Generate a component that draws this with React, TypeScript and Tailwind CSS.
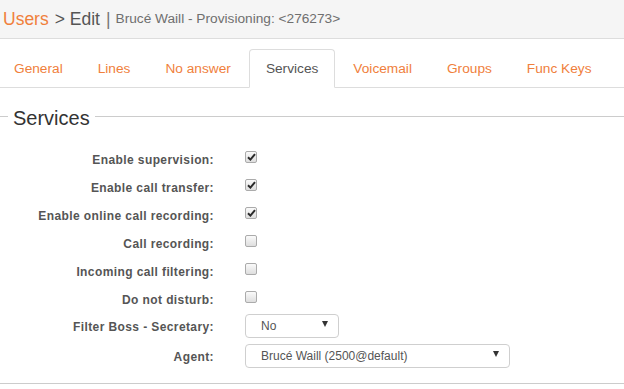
import React from "react"

const tabs = ["General", "Lines", "No answer", "Services", "Voicemail", "Groups", "Func Keys"]

const rows = [
  { label: "Enable supervision:", checked: true },
  { label: "Enable call transfer:", checked: true },
  { label: "Enable online call recording:", checked: true },
  { label: "Call recording:", checked: false },
  { label: "Incoming call filtering:", checked: false },
  { label: "Do not disturb:", checked: false },
]

function Checkbox({ checked }: { checked: boolean }) {
  return (
    <span className="mt-[7px] flex h-[12px] w-[12px] items-center justify-center rounded-[2px] border border-[#ababab] bg-gradient-to-b from-[#fafafa] to-[#dedede]">
      {checked && (
        <svg width="9" height="8" viewBox="0 0 9 8">
          <path d="M1 4.3 L3.4 6.6 L8 1.2" fill="none" stroke="#2b2b2b" strokeWidth="2" />
        </svg>
      )}
    </span>
  )
}

function Select({ value, width }: { value: string; width: string }) {
  return (
    <div
      className={`${width} relative flex h-[24px] items-center rounded-[4px] border border-[#cfcfcf] bg-white pl-[15px] text-[12px] text-[#555]`}
    >
      {value}
      <svg className="absolute right-[10px] top-[6px]" width="6" height="6" viewBox="0 0 6 6">
        <path d="M0 0 H6 L3 6 Z" fill="#333" />
      </svg>
    </div>
  )
}

export default function App() {
  return (
    <div className="h-[389px] w-[624px] overflow-hidden bg-white font-['Liberation_Sans',Arial,sans-serif]">
      <div className="flex h-[39px] items-center border-b border-[#dddddd] bg-[#f5f5f5] pl-[3px] pt-[1px]">
        <span className="text-[17.5px] text-[#f0803c]">Users</span>
        <span className="ml-[6px] text-[17.5px] text-[#555]">&gt; Edit</span>
        <span className="ml-[6px] text-[17.5px] text-[#777]">|</span>
        <span className="ml-[5px] text-[13.7px] text-[#6f6f6f]">Brucé Waill - Provisioning: &lt;276273&gt;</span>
      </div>

      <div className="mt-[10px] flex border-b border-[#dddddd]">
        <div className="-ml-[3px] flex">
          {tabs.map((t) => (
            <div
              key={t}
              className={`-mb-px mr-[1px] flex h-[39px] items-center px-4 pt-[1px] text-[13.7px] ${
                t === "Services"
                  ? "rounded-t-[4px] border border-b-white border-[#dddddd] bg-white text-[#555]"
                  : "border border-transparent text-[#f0803c]"
              }`}
            >
              {t}
            </div>
          ))}
        </div>
      </div>

      <div className="mt-[16px] flex h-[28px] items-center">
        <div className="mt-[-4px] h-px w-[8px] bg-[#cccccc]" />
        <span className="px-[5px] text-[20px] leading-[28px] text-[#333]">Services</span>
        <div className="mt-[-4px] h-px flex-1 bg-[#cccccc]" />
      </div>

      <div className="mt-[12px] grid grid-cols-[214px_1fr] gap-x-[31px]">
        {rows.map((r) => (
          <React.Fragment key={r.label}>
            <div className="h-[28px] pt-[9px] text-right text-[12px] font-bold leading-[14px] tracking-[0.4px] text-[#555]">
              {r.label}
            </div>
            <div className="h-[28px]">
              <Checkbox checked={r.checked} />
            </div>
          </React.Fragment>
        ))}
        <div className="mt-[2px] flex h-[24px] items-center justify-end pt-[2px] text-[12px] font-bold tracking-[0.4px] text-[#555]">
          Filter Boss - Secretary:
        </div>
        <div className="mt-[2px]">
          <Select value="No" width="w-[94px]" />
        </div>
        <div className="mt-[6px] flex h-[24px] items-center justify-end pt-[2px] text-[12px] font-bold tracking-[0.4px] text-[#555]">
          Agent:
        </div>
        <div className="mt-[6px]">
          <Select value="Brucé Waill (2500@default)" width="w-[265px]" />
        </div>
      </div>

      <div className="mt-[15px] h-px bg-[#cccccc]" />
    </div>
  )
}
